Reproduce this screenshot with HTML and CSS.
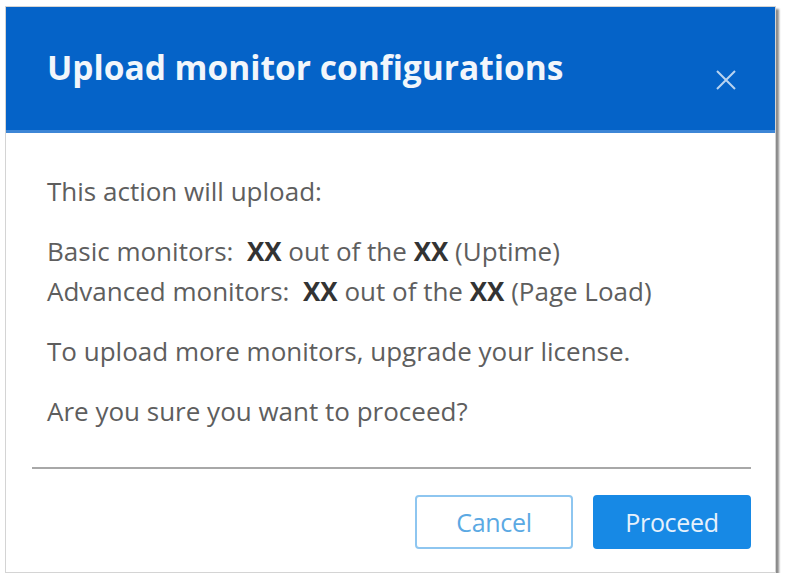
FILE: index.html
```html
<!DOCTYPE html>
<html lang="en">
<head>
  <meta charset="UTF-8">
  <title>Upload monitor configurations</title>
  <link rel="stylesheet" href="styles.css">
</head>
<body>
  <div class="dialog">
    <div class="dialog-header">
      <h1>Upload monitor configurations</h1>
      <button class="close" aria-label="Close">
        <svg width="22" height="22" viewBox="0 0 22 22"><path d="M2 2 L20 20 M20 2 L2 20" stroke="#b9d3f0" stroke-width="2" fill="none"/></svg>
      </button>
    </div>
    <div class="dialog-body">
      <p>This action will upload:</p>
      <p class="counts">
        Basic monitors:&nbsp; <b>XX</b> out of the <b>XX</b> (Uptime)<br>
        Advanced monitors:&nbsp; <b>XX</b> out of the <b>XX</b> (Page Load)
      </p>
      <p>To upload more monitors, upgrade your license.</p>
      <p>Are you sure you want to proceed?</p>
    </div>
    <div class="dialog-footer">
      <button class="btn btn-cancel">Cancel</button>
      <button class="btn btn-proceed">Proceed</button>
    </div>
  </div>
</body>
</html>
```

FILE: styles.css
```css
body {
  margin: 0;
  background: #ffffff;
  font-family: "Open Sans", "Noto Sans", sans-serif;
}

.dialog {
  margin: 6px 0 0 5px;
  width: 771px;
  height: 567px;
  box-sizing: border-box;
  border: 1px solid #d4d4d4;
  background: #fff;
  box-shadow: 3px 3px 2px #8a8a8a;
  display: flex;
  flex-direction: column;
}

.dialog-header {
  background: #0563c8;
  height: 123px;
  border-bottom: 3px solid #3d86d6;
  display: flex;
  align-items: center;
  justify-content: space-between;
  padding: 0 38px 0 41px;
}

.dialog-header h1 {
  margin: 0;
  color: #f2f6fb;
  font-size: 33.5px;
  font-weight: 700;
  padding-bottom: 4px;
  white-space: nowrap;
}

.close {
  background: none;
  border: none;
  padding: 0;
  margin-top: 22px;
  line-height: 0;
}

.dialog-body {
  padding: 38px 41px 0;
  color: #5e5e5e;
  font-size: 26px;
  white-space: nowrap;
  flex: 1;
}

.dialog-body p {
  margin: 0 0 20px;
  line-height: 40px;
}

.dialog-body b {
  color: #333;
}

.dialog-footer {
  margin: 0 24px 0 26px;
  border-top: 2px solid #a8a8a8;
  padding: 26px 0 23px;
  display: flex;
  justify-content: flex-end;
  gap: 20px;
}

.btn {
  width: 158px;
  height: 54px;
  border-radius: 4px;
  font-family: inherit;
  font-size: 25px;
  letter-spacing: -0.3px;
}

.btn-cancel {
  background: #fff;
  border: 2px solid #8ec6f0;
  color: #5ba9e3;
}

.btn-proceed {
  background: #1789e5;
  border: 2px solid #1789e5;
  color: #e6f1fc;
}
```
